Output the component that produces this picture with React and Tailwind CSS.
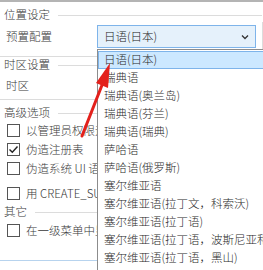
import React from "react";

const options = [
  "日语(日本)",
  "瑞典语",
  "瑞典语(奥兰岛)",
  "瑞典语(芬兰)",
  "瑞典语(瑞典)",
  "萨哈语",
  "萨哈语(俄罗斯)",
  "塞尔维亚语",
  "塞尔维亚语(拉丁文，科索沃)",
  "塞尔维亚语(拉丁语)",
  "塞尔维亚语(拉丁语，波斯尼亚和黑山)",
  "塞尔维亚语(拉丁语，黑山)",
];

function GroupTitle({ children, className = "" }) {
  return (
    <div className={`flex h-[14px] items-center gap-2 pl-1 ${className}`}>
      <span className="text-[#3a3a3a]">{children}</span>
      <div className="h-px flex-1 bg-[#dcdcdc]" />
    </div>
  );
}

function Check({ checked, label, className = "" }) {
  return (
    <div className={`flex h-[19px] items-center gap-[6px] pl-[7px] whitespace-nowrap ${className}`}>
      <div className="flex h-[13px] w-[13px] items-center justify-center border border-[#555] bg-white">
        {checked ? (
          <svg width="11" height="11" viewBox="0 0 11 11">
            <path d="M1.5 5.5 L4.3 8.3 L9.5 2.5" fill="none" stroke="#222" strokeWidth="1.4" />
          </svg>
        ) : null}
      </div>
      <span className="text-[#3a3a3a]">{label}</span>
    </div>
  );
}

export default function App() {
  return (
    <div
      className="relative h-[270px] w-[263px] overflow-hidden bg-white text-[11.5px] font-light leading-none"
      style={{ fontFamily: '"Noto Sans CJK SC", "Noto Sans", sans-serif' }}
    >
      <div className="h-[2px] bg-[#b4b4b4]" />

      <div className="flex flex-col">
        <GroupTitle className="mt-[6px] pr-[1px]">位置设定</GroupTitle>
        <div className="flex h-[34px] items-start border-r border-[#dcdcdc]">
          <span className="mt-[9px] pl-[6px] text-[#3a3a3a]">预置配置</span>
          <div className="ml-auto mr-[6px] mt-[3px] flex h-[23px] w-[159px] items-center justify-between border border-[#7eb4ea] bg-[#e5f1fb] px-[6px]">
            <span className="text-[#222]">日语(日本)</span>
            <svg width="8" height="6" viewBox="0 0 8 6">
              <path d="M1 1.5 L4 4.5 L7 1.5" fill="none" stroke="#333" strokeWidth="1.3" />
            </svg>
          </div>
        </div>
        <div className="h-px bg-[#dcdcdc]" />

        <GroupTitle className="mt-px">时区设置</GroupTitle>
        <div className="flex h-[27px] items-center pl-[6px] text-[#3a3a3a]">时区</div>
        <div className="h-px bg-[#dcdcdc]" />

        <GroupTitle className="mt-[6px]">高级选项</GroupTitle>
        <div className="mt-px flex flex-col">
          <Check label="以管理员权限运行" />
          <Check checked label="伪造注册表" />
          <Check label="伪造系统 UI 语言" />
          <Check label="用 CREATE_SUSPENDED" className="mt-[6px]" />
        </div>

        <GroupTitle className="mt-[2px]">其它</GroupTitle>
        <Check label="在一级菜单中显示" className="mt-[2px]" />
        <div className="mt-[20px] h-px bg-[#b7d3ee]" />
      </div>

      <div className="absolute left-[97px] top-[49px] h-[240px] w-[200px] border border-[#8c8c8c] bg-white py-px">
        {options.map((opt, i) => (
          <div
            key={opt}
            className={`flex h-[18px] items-center whitespace-nowrap pl-[5px] text-[#2a2a2a] ${
              i === 0 ? "border border-[#7eb4ea] bg-[#cce8ff]" : "border border-transparent"
            }`}
          >
            {opt}
          </div>
        ))}
      </div>

      <svg className="absolute left-0 top-0" width="263" height="270" viewBox="0 0 263 270">
        <line x1="82" y1="136" x2="104" y2="80" stroke="#e3211c" strokeWidth="3" strokeLinecap="round" />
        <polygon points="110,63 96,83 108,88" fill="#e3211c" />
      </svg>
    </div>
  );
}
